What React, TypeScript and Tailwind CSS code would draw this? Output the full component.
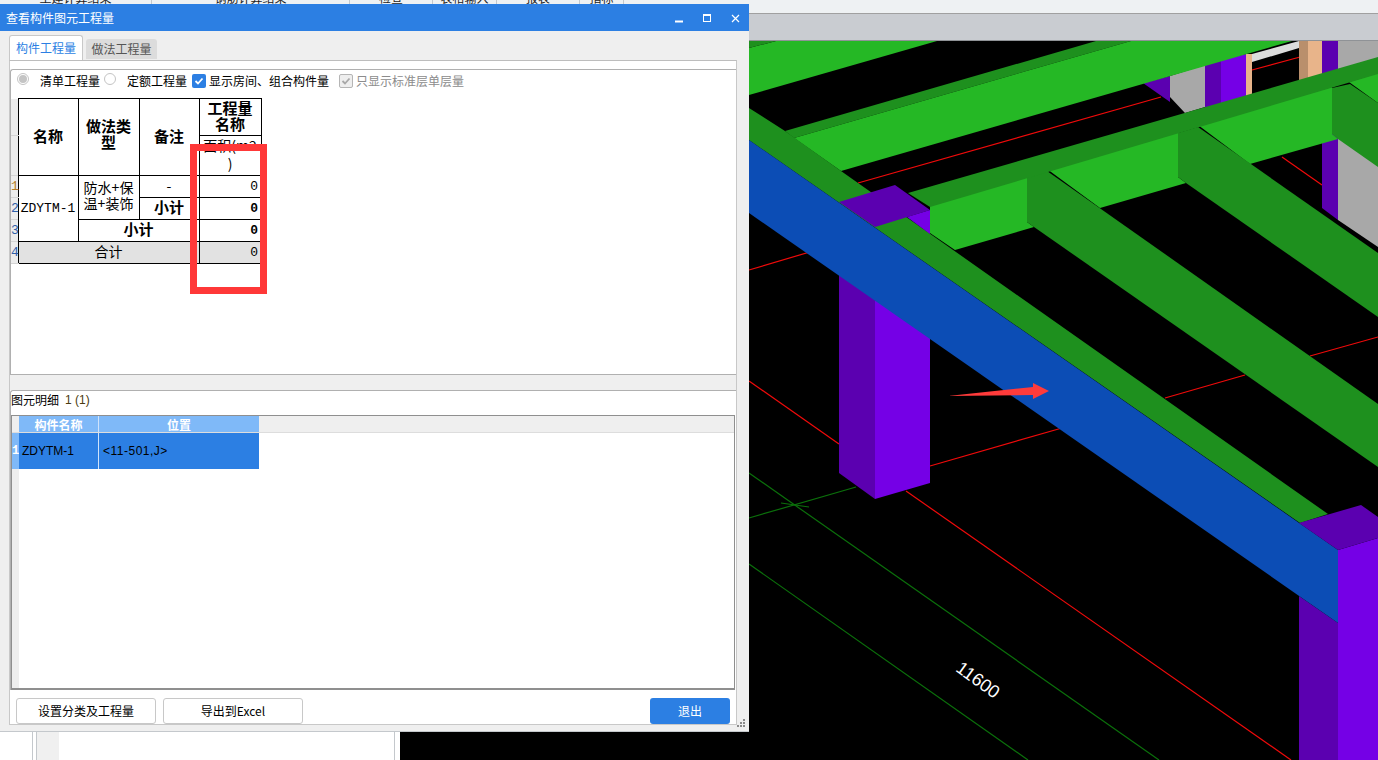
import React from "react";

const cjk = "font-['Noto_Sans_CJK_SC','Liberation_Sans',sans-serif]";
const mono = "font-['Liberation_Mono',monospace]";

const topTabs = [
  { label: "土建计算结果", w: "w-[152px]" },
  { label: "钢筋计算结果", w: "w-[198px]" },
  { label: "检查", w: "w-[83px]" },
  { label: "表格输入", w: "w-[64px]" },
  { label: "报表", w: "w-[83px]" },
  { label: "指标", w: "w-[44px]" },
];

function Scene() {
  return (
    <svg viewBox="400 41 978 719" className="flex-1 h-full block bg-black">
      {/* red axis lines */}
      <g stroke="#f00a0a" strokeWidth="1.2" fill="none">
        <path d="M858 183L1161 97" />
        <path d="M1252 70L1300 57" />
        <path d="M1282 157L1322 185" />
        <path d="M749 270L830 246" />
        <path d="M749 381L839 444" />
        <path d="M906 491L1291 760" />
        <path d="M930 466L1062 428" />
        <path d="M1165 398L1245 375" />
        <path d="M1310 356L1378 337" />
      </g>
      {/* green axis lines */}
      <g stroke="#0b700b" strokeWidth="1.2" fill="none">
        <path d="M749 473L1159 760" />
        <path d="M749 564L1028 760" />
        <path d="M749 518L856 487" />
        <path d="M781 503L809 507" />
      </g>
      {/* back walls and columns */}
      <polygon points="1170,76 1205,65 1205,107 1185,113 1170,97" fill="#a8a8a8" />
      <polygon points="1143,83 1170,76 1170,102" fill="#5b00b0" />
      <polygon points="1205,65 1221,60 1221,105 1205,110" fill="#5b00b0" />
      <polygon points="1221,60 1246,54 1246,100 1221,105" fill="#7500e6" />
      <polygon points="1246,54 1252,54 1252,98 1246,100" fill="#e8b48a" />
      <polygon points="1252,54 1299,41 1299,48 1252,62" fill="#dcdcdc" />
      <polygon points="1299,41 1308,41 1308,84 1299,84" fill="#b98f6c" />
      <polygon points="1308,41 1322,41 1322,80 1308,84" fill="#e8b48a" />
      <polygon points="1322,41 1338,41 1338,76 1322,80" fill="#5b00b0" />
      <polygon points="1338,41 1378,41 1378,58 1338,70" fill="#a8a8a8" />
      <polygon points="1322,125 1338,125 1338,220 1322,208" fill="#5b00b0" />
      <polygon points="1338,125 1378,125 1378,247 1338,220" fill="#a8a8a8" />
      {/* bright green slabs */}
      <polygon points="749,48 776,41 937,41 749,95" fill="#25b825" />
      <polygon points="749,41 776,41 749,48" fill="#1e901e" />
      <polygon points="1096,41 1131,41 794,138 785,131" fill="#1e901e" />
      <polygon points="1131,41 1292,41 841,171 794,138" fill="#25b825" />
      <polygon points="930,205 1027,175 1027,222 1034,227 955,250 930,233" fill="#25b825" />
      <polygon points="1047,169 1178,131 1178,177 1186,183 1100,208" fill="#25b825" />
      <polygon points="1198,125 1332,87 1332,134 1338,139 1250,164" fill="#25b825" />
      <polygon points="1349,82 1378,73 1378,103" fill="#25b825" />
      {/* dark green beams */}
      <polygon points="1027,177 1047,171 1378,404 1378,467 1034,227 1027,222" fill="#1e901e" />
      <polygon points="1178,133 1198,127 1378,253 1378,317 1186,183 1178,177" fill="#1e901e" />
      <polygon points="1332,88 1350,84 1378,103 1378,167 1338,139 1332,134" fill="#1e901e" />
      <polygon points="908,193 1378,57 1378,74 930,207" fill="#1e901e" />
      <polygon points="749,108 785,131 841,171 858,183 1328,514 1300,523 749,140" fill="#1e901e" />
      {/* columns */}
      <polygon points="839,273 875,298 875,499 839,473" fill="#5b00b0" />
      <polygon points="875,298 930,337 930,483 875,499" fill="#7500e6" />
      <polygon points="1299,596 1338,623 1338,760 1299,760" fill="#5b00b0" />
      <polygon points="1338,550 1378,538 1378,760 1338,760" fill="#7500e6" />
      {/* blue beam */}
      <polygon points="749,140 1338,550 1338,623 749,213" fill="#0c4db5" />
      {/* column caps */}
      <polygon points="839,202 895,185 930,210 875,227" fill="#5b00b0" />
      <polygon points="907,217 930,210 930,234" fill="#7500e6" />
      <polygon points="1299,523 1361,505 1378,517 1378,538 1338,550" fill="#5b00b0" />
      {/* annotation arrow */}
      <polygon points="948,396 1033,387 1033,383 1049,391 1033,399 1033,395" fill="#ff3b3b" />
      <text
        x="978"
        y="686"
        fill="#ffffff"
        fontSize="18"
        fontFamily="Liberation Sans, sans-serif"
        textAnchor="middle"
        transform="rotate(36 978 680)"
      >
        11600
      </text>
    </svg>
  );
}

function CheckBox({ muted }: { muted?: boolean }) {
  return (
    <span
      className={
        muted
          ? "w-[14px] h-[14px] rounded-[2px] border border-[#b5b5b5] bg-[#eeeeee] flex items-center justify-center"
          : "w-[14px] h-[14px] rounded-[2px] bg-[#2c7fe3] flex items-center justify-center"
      }
    >
      <svg width="10" height="10" viewBox="0 0 10 10" fill="none">
        <path d="M1.5 5L4 7.5L8.5 2.5" stroke={muted ? "#a8a8a8" : "#ffffff"} strokeWidth="1.8" />
      </svg>
    </span>
  );
}

function RowNo({ n, color }: { n: number; color: string }) {
  return (
    <td className={`p-0 bg-[#ececec] border-b border-[#d4d4d4] text-[13px] leading-none text-center ${color} ${mono}`}>
      {n}
    </td>
  );
}

function QuantityTable() {
  const cell = "border border-black p-0 pb-[3px] text-center text-black";
  const head = `${cell} font-bold text-[15px]`;
  const zero = `border border-black border-r-0 p-0 pr-[3px] text-right text-[13px] text-black ${mono}`;
  return (
    <table className={`table-fixed border-collapse w-[250px] mt-[6px] text-[14px] leading-[16px] ${cjk}`}>
      <colgroup>
        <col className="w-[7px]" />
        <col className="w-[60px]" />
        <col className="w-[61px]" />
        <col className="w-[60px]" />
        <col className="w-[62px]" />
      </colgroup>
      <tbody>
        <tr className="h-[37px]">
          <td className="p-0 bg-[#ececec] border-b border-[#d4d4d4]" />
          <td rowSpan={2} className={head}>名称</td>
          <td rowSpan={2} className={`${head} pb-[6px]`}>
            做法类
            <br />型
          </td>
          <td rowSpan={2} className={head}>备注</td>
          <td className={head}>
            工程量
            <br />名称
          </td>
        </tr>
        <tr className="h-[39px]">
          <td className="p-0 bg-[#ececec] border-b border-[#d4d4d4]" />
          <td className={`${cell} align-top leading-[18px]`}>
            面积(m2
            <br />)
          </td>
        </tr>
        <tr className="h-[22px]">
          <RowNo n={1} color="text-[#b5802a]" />
          <td rowSpan={3} className={`border border-black p-0 text-center text-black text-[13px] ${mono}`}>ZDYTM-1</td>
          <td rowSpan={2} className={`${cell} pb-[6px]`}>防水+保温+装饰</td>
          <td className={cell}>-</td>
          <td className={zero}>0</td>
        </tr>
        <tr className="h-[22px]">
          <RowNo n={2} color="text-[#2f5fa8]" />
          <td className={head}>小计</td>
          <td className={`${zero} font-bold`}>0</td>
        </tr>
        <tr className="h-[22px]">
          <RowNo n={3} color="text-[#2f5fa8]" />
          <td colSpan={2} className={head}>小计</td>
          <td className={`${zero} font-bold`}>0</td>
        </tr>
        <tr className="h-[22px] bg-[#e2e2e2]">
          <RowNo n={4} color="text-[#2f5fa8]" />
          <td colSpan={3} className={cell}>合计</td>
          <td className={zero}>0</td>
        </tr>
      </tbody>
    </table>
  );
}

function QuantityDialog() {
  return (
    <div className={`absolute left-0 top-[4px] w-[749px] h-[728px] flex flex-col bg-[#efefef] border-b border-[#c4c8cc] text-[12px] ${cjk}`}>
      {/* title bar */}
      <div className="h-[27px] shrink-0 bg-[#2c7fe3] flex items-center pl-[6px] text-white">
        <span className="flex-1 leading-none">查看构件图元工程量</span>
        <svg width="65" height="12" viewBox="0 0 65 12" className="mr-[9px]" fill="none" stroke="#ffffff">
          <path d="M0 9.5H8" strokeWidth="2" />
          <rect x="28.5" y="2.5" width="7" height="7" strokeWidth="1" />
          <path d="M28.5 3H35.5" strokeWidth="2" />
          <path d="M57 3L64 10M64 3L57 10" strokeWidth="1.2" />
        </svg>
      </div>

      {/* tabs */}
      <div className="h-[29px] shrink-0 flex items-end pl-[9px]">
        <div className="w-[74px] h-[25px] bg-white border border-b-0 border-[#c8c8c8] rounded-t-[3px] flex items-center justify-center text-[#2c7fe3]">
          构件工程量
        </div>
        <div className="w-[71px] h-[20px] ml-[3px] mb-px bg-[#dcdcdc] rounded-t-[3px] flex items-center justify-center text-[#555555]">
          做法工程量
        </div>
      </div>

      {/* page body */}
      <div className="ml-[9px] w-[728px] h-[665px] shrink-0 flex flex-col bg-white border border-[#c8c8c8] border-t-[#bdbdbd]">
        <div className="h-[8px] shrink-0" />

        {/* upper panel */}
        <div className="h-[306px] shrink-0 border-l border-t border-b border-[#b0b0b0] rounded-tl-[3px] flex flex-col">
          <div className="h-[22px] shrink-0 flex items-center text-black">
            <span className="ml-[6px] w-[12px] h-[12px] -mt-[4px] rounded-full border border-[#c4c4c4] flex items-center justify-center">
              <span className="w-[8px] h-[8px] rounded-full bg-[#c4c4c4]" />
            </span>
            <span className="ml-[11px]">清单工程量</span>
            <span className="ml-[4px] w-[12px] h-[12px] -mt-[4px] rounded-full border border-[#c4c4c4]" />
            <span className="ml-[11px]">定额工程量</span>
            <span className="ml-[5px]"><CheckBox /></span>
            <span className="ml-[3px]">显示房间、组合构件量</span>
            <span className="ml-[10px]"><CheckBox muted /></span>
            <span className="ml-[3px] text-[#8c8c8c]">只显示标准层单层量</span>
          </div>
          <QuantityTable />
        </div>

        <div className="h-[15px] shrink-0 bg-[#efefef]" />

        {/* lower panel */}
        <div className="h-[300px] shrink-0 border-l border-t border-[#b0b0b0] rounded-tl-[3px] flex flex-col">
          <div className="h-[24px] shrink-0 flex items-center pb-[7px] text-black">
            <span>图元明细</span>
            <span className="ml-[6px] text-[#4a3a10] font-['Liberation_Sans',sans-serif]">1 (1)</span>
          </div>
          <div className="w-[724px] h-[276px] border border-b-2 border-[#8f8f8f] flex flex-col">
            <div className="h-[17px] shrink-0 flex bg-[#efefef] text-white font-bold text-center leading-[17px] border-b border-[#dddddd]">
              <div className="w-[7px]" />
              <div className="w-[80px] bg-[#7fb9f8] border-r border-[#cfe3fb]">构件名称</div>
              <div className="w-[160px] bg-[#7fb9f8]">位置</div>
            </div>
            <div className="flex-1 flex">
              <div className="w-[7px] bg-[#eeeeee]">
                <div className={`h-[36px] bg-[#7fb9f8] text-white font-bold flex items-center justify-center text-[12px] ${mono}`}>1</div>
              </div>
              <div className="h-[36px] flex text-black font-['Liberation_Sans',sans-serif]">
                <div className="w-[80px] bg-[#2c7fe3] border-r border-[#cfe3fb] flex items-center pl-[3px] text-[12px]">ZDYTM-1</div>
                <div className="w-[160px] bg-[#2c7fe3] flex items-center pl-[4px] text-[12px] tracking-[0.5px]">&lt;11-501,J&gt;</div>
              </div>
            </div>
          </div>
        </div>

        {/* footer buttons */}
        <div className="flex-1 flex items-start pt-[8px] pl-[6px] text-black">
          <button className="w-[140px] h-[26px] bg-white border border-[#c8c8c8] rounded-[3px]">设置分类及工程量</button>
          <button className="w-[140px] h-[26px] ml-[7px] bg-white border border-[#c8c8c8] rounded-[3px]">导出到Excel</button>
          <button className="w-[80px] h-[26px] ml-[347px] bg-[#2c7fe3] text-white rounded-[3px]">退出</button>
        </div>
      </div>

      {/* resize grip */}
      <svg width="9" height="9" viewBox="0 0 9 9" fill="#8a8a8a" className="absolute right-[3px] bottom-[3px]">
        <rect x="6" y="0" width="2" height="2" />
        <rect x="3" y="3" width="2" height="2" />
        <rect x="6" y="3" width="2" height="2" />
        <rect x="0" y="6" width="2" height="2" />
        <rect x="3" y="6" width="2" height="2" />
        <rect x="6" y="6" width="2" height="2" />
      </svg>

      {/* red highlight drawn on the screenshot */}
      <div className="absolute left-[190px] top-[140px] w-[77px] h-[150px] border-[7px] border-[#ff3838] pointer-events-none" />
    </div>
  );
}

export default function App() {
  return (
    <div className={`relative w-[1378px] h-[760px] overflow-hidden flex flex-col bg-white ${cjk}`}>
      {/* result tabs, mostly hidden by the dialog */}
      <div className="h-[14px] shrink-0 flex bg-[#eef1f3] border-b border-[#a0a0a0] overflow-hidden">
        {topTabs.map((t) => (
          <div key={t.label} className={`${t.w} shrink-0 border-r border-[#c4c8cc] text-center text-[12px] leading-[12px] -mt-[8px] h-[22px] text-[#222222]`}>
            {t.label}
          </div>
        ))}
      </div>
      <div className="h-[27px] shrink-0 bg-[#c9ccd1] border-b border-[#8f9296]" />

      {/* workspace */}
      <div className="flex-1 flex min-h-0">
        <div className="w-[400px] shrink-0 bg-white flex">
          <div className="w-[33px] border-r border-[#c4c8cc]" />
          <div className="w-[4px] border-r border-[#c4c8cc]" />
          <div className="w-[22px] bg-[#f0f0f0]" />
          <div className="w-[336px] border-r border-[#c4c8cc]" />
        </div>
        <Scene />
      </div>

      <QuantityDialog />
    </div>
  );
}
